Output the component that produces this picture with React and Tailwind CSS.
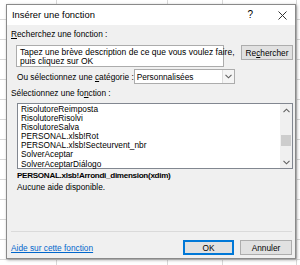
import React from 'react';

const font = { fontFamily: '"Liberation Sans", Arial, sans-serif' };

const functions = [
  'RisolutoreReimposta',
  'RisolutoreRisolvi',
  'RisolutoreSalva',
  'PERSONAL.xlsb!Rot',
  'PERSONAL.xlsb!Secteurvent_nbr',
  'SolverAceptar',
  'SolverAceptarDiálogo',
];

const Chevron = ({ up }) => (
  <svg width="7" height="5" viewBox="0 0 7 5" className="block">
    <path
      d={up ? 'M0.5 4.2 L3.5 1.2 L6.5 4.2' : 'M0.5 0.8 L3.5 3.8 L6.5 0.8'}
      fill="none"
      stroke="#606060"
      strokeWidth="1.1"
    />
  </svg>
);

export default function App() {
  return (
    <div
      className="w-[300px] h-[265px] overflow-hidden bg-white pt-[4px] pl-[6px] bg-[linear-gradient(90deg,transparent_56px,#d9d9d9_56px,#d9d9d9_57px,transparent_57px,transparent_167px,#d9d9d9_167px,#d9d9d9_168px,transparent_168px,transparent_222px,#d9d9d9_222px,#d9d9d9_223px,transparent_223px,transparent_296px,#d9d9d9_296px,#d9d9d9_297px,transparent_297px),linear-gradient(180deg,transparent_19px,#d9d9d9_19px,#d9d9d9_20px,transparent_20px)] bg-[length:300px_265px,300px_20px]"
      style={font}
    >
      {/* Dialog */}
      <div className="w-[290px] h-[255px] border border-[#8a8a8a] bg-[#f0f0f0] flex flex-col shadow-[1px_1px_3px_rgba(0,0,0,0.35)] text-[8.3px] text-black whitespace-nowrap">
        {/* Title bar */}
        <div className="h-[20px] bg-white flex items-center pl-[5px] pr-[8px]">
          <span className="text-[9.4px] leading-[10px]">Insérer une fonction</span>
          <span className="ml-auto text-[10px] leading-[10px] mr-[25px]">?</span>
          <svg width="9" height="9" viewBox="0 0 9 9">
            <path d="M0.5 0.5 L8.5 8.5 M8.5 0.5 L0.5 8.5" stroke="#333" strokeWidth="1" />
          </svg>
        </div>

        {/* Body */}
        <div className="flex-1 flex flex-col pl-[4px] pr-[2px]">
          <div className="mt-[4px] h-[10px] leading-[10px]">
            <span className="underline">R</span>echerchez une fonction :
          </div>

          <div className="mt-[6px] flex items-start">
            <div className="ml-[5px] w-[208px] h-[22px] bg-white border border-[#acacac] px-[3px] pt-[2px] leading-[9px] text-[8.5px]">
              Tapez une brève description de ce que vous voulez faire,
              <br />
              puis cliquez sur OK
            </div>
            <button className="ml-auto w-[52px] h-[15px] bg-[#e1e1e1] border border-[#adadad] leading-[12px] text-[8.3px]">
              Re<span className="underline">c</span>hercher
            </button>
          </div>

          <div className="mt-[2px] flex items-center h-[15px]">
            <span className="ml-[6px] shrink-0 leading-[10px]">
              Ou sélectionnez une <span className="underline">c</span>atégorie :
            </span>
            <div className="ml-auto mr-[59px] shrink-0 w-[101px] h-[15px] bg-white border border-[#acacac] flex items-center">
              <span className="pl-[2px] leading-[10px]">Personnalisées</span>
              <div className="ml-auto w-[12px] h-full border-l border-[#dcdcdc] bg-[#f5f5f5] flex items-center justify-center">
                <Chevron />
              </div>
            </div>
          </div>

          <div className="mt-[4px] h-[10px] leading-[10px]">
            Sélectionnez une fo<span className="underline">n</span>ction :
          </div>

          {/* List */}
          <div className="mt-[5px] ml-[6px] h-[66px] bg-white border border-[#828790] flex">
            <div className="flex-1 pl-[3px] pt-[1px]">
              {functions.map((f) => (
                <div key={f} className="h-[9.1px] leading-[9px]">
                  {f}
                </div>
              ))}
            </div>
            <div className="w-[12px] bg-[#f0f0f0] flex flex-col items-center">
              <div className="h-[12px] flex items-center">
                <Chevron up />
              </div>
              <div className="mt-[19px] w-[10px] h-[11px] bg-[#cdcdcd]" />
              <div className="mt-auto h-[12px] flex items-center">
                <Chevron />
              </div>
            </div>
          </div>

          <div className="mt-[2px] ml-[6px] h-[10px] leading-[10px] font-bold text-[8.1px] tracking-[-0.3px]">
            PERSONAL.xlsb!Arrondi_dimension(xdim)
          </div>
          <div className="mt-[1px] ml-[6px] h-[10px] leading-[10px]">Aucune aide disponible.</div>

          <div className="flex-1" />
          <div className="h-px bg-[#dadada] mr-[1px]" />

          <div className="mt-[8px] h-[15px] flex items-center">
            <span className="text-[#0066cc] underline leading-[10px]">Aide sur cette fonction</span>
            <button className="ml-auto w-[51px] h-[15px] bg-[#e1e1e1] border border-[#0078d7] shadow-[inset_0_0_0_1px_#0078d7] leading-[12px] text-[8.3px]">
              OK
            </button>
            <button className="ml-[6px] mr-[1px] w-[52px] h-[15px] bg-[#e1e1e1] border border-[#adadad] leading-[12px] text-[8.3px]">
              Annuler
            </button>
          </div>
          <div className="h-[3px]" />
        </div>
      </div>
    </div>
  );
}
